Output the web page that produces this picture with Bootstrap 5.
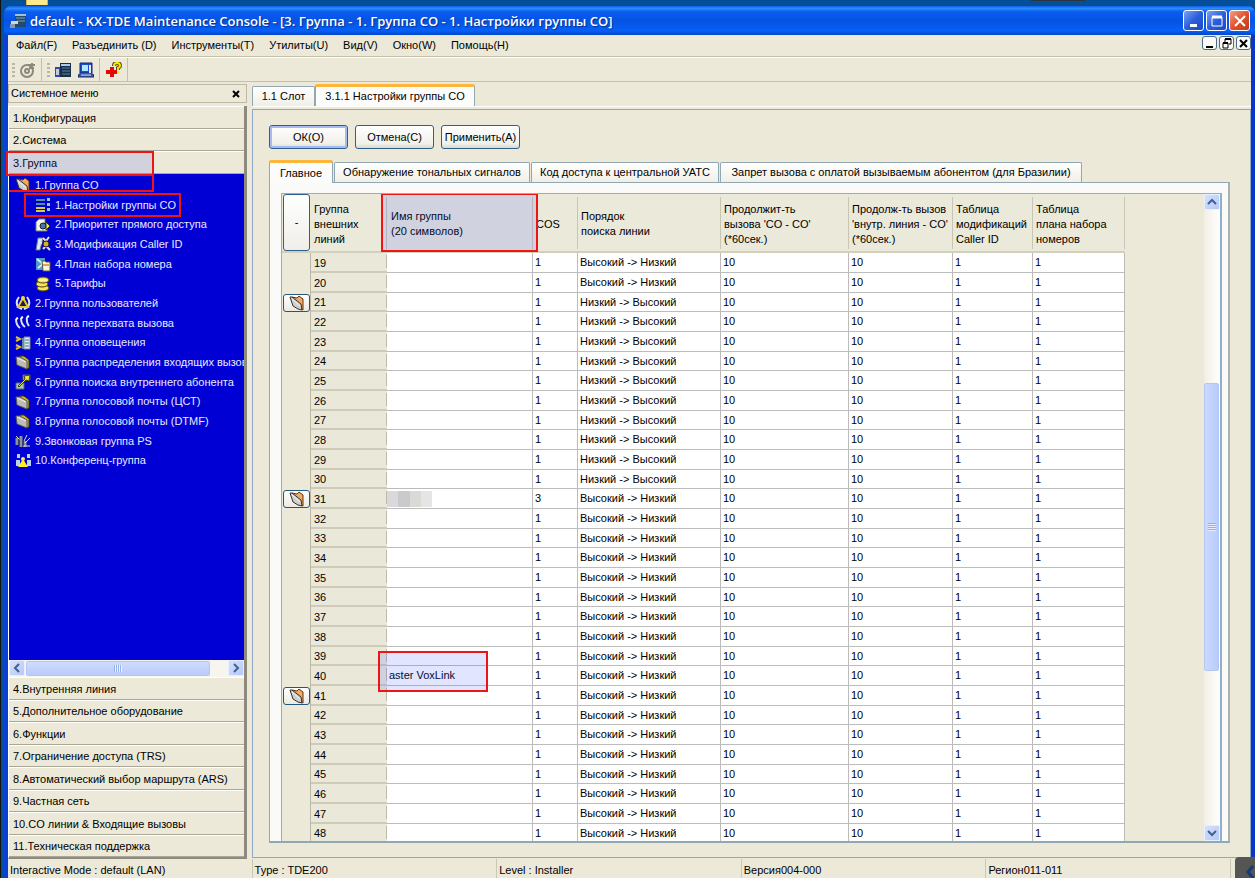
<!DOCTYPE html>
<html lang="ru">
<head>
<meta charset="utf-8">
<meta name="viewport" content="width=device-width, initial-scale=1">
<title>KX-TDE Maintenance Console</title>
<link href="https://cdn.jsdelivr.net/npm/bootstrap@5.3.0/dist/css/bootstrap.min.css" rel="stylesheet">
<style>
:root{--face:#ece9d8;--line:#c4c0ae;--steel:#91a7b4}
body{font:11px/15px "Liberation Sans",Arial,sans-serif;color:#000;background:#054e98;height:100vh;overflow:hidden}
button,input{font:inherit;color:inherit}
.desk{height:6px;flex:none;padding-left:25px;padding-right:170px}
.desk-folder{width:22px;height:5px;background:#ffe98a;border:solid #d9b64a;border-width:0 1px}
.desk-bar{width:54px;height:1px;background:#2a3340}
.win{margin-left:3px;border:solid #0a3fd8;border-width:0 4px;border-right-color:#0a35c8;background:var(--face);border-top-left-radius:7px;border-top-right-radius:7px;min-height:0}
.left-edge{border-left:1px solid #111}
.titlebar{height:29px;flex:none;margin:0 -4px;padding:0 5px 0 6px;border-radius:7px 7px 0 0;background:linear-gradient(#0a5fe6,#2b8cff 8%,#0a5cf0 20%,#0553e2 50%,#0560f8 85%,#0346c8)}
.titlebar h1{font:600 13px/20px "Open Sans","Noto Sans",sans-serif;color:#fff;text-shadow:1px 1px 1px #0a2f90}
.caps{gap:2px}
.cap{width:21px;height:21px;padding:0;border:1px solid #fff;border-radius:3px;background:linear-gradient(135deg,#7ba2f5,#2c5fdd 50%,#1c49c4)}
.cap-x{background:linear-gradient(135deg,#f0a088,#e0522e 50%,#c23a18)}
.cap svg,.mini svg{display:block;margin:auto}
.menubar{height:22px;flex:none;border-bottom:1px solid var(--line);padding:0 0 0 8px}
.menubar nav{gap:15px}
.menubar a{color:#000;text-decoration:none}
.mini{width:15px;height:14px;padding:0;border:1px solid #4a6d92;border-radius:3px;background:#fafaf6}
.toolbar{height:25px;flex:none;border-top:1px solid #fff;border-bottom:1px solid var(--line);padding-left:4px;gap:5px}
.grip{width:3px;height:14px;background:repeating-linear-gradient(#bbb7a4 0 2px,transparent 2px 4px)}
.tool{width:16px;height:16px;padding:0;border:0;background:none}
.tool+.tool{margin-left:2px}
.tool svg{display:block}
.vsep{width:1px;height:23px;background:var(--line)}
.vsep+.tool{margin-left:1px}
.side{width:239px;flex:none;margin-top:2px}
.side-head{height:19px;border:1px solid #bdb9a6;padding:0 5px 0 2px}
.side-head button{border:0;background:none;padding:0 1px}
.side-body{margin-top:3px;border:solid #8e8b7e;border-width:0 3px 2px 0;border-left:1px solid #fff;min-height:0}
.acc button{display:block;width:100%;height:23px;border:0;border-top:1px solid #fff;border-bottom:1px solid #aca899;background:var(--face);text-align:left;padding:0 4px;line-height:20px;flex:none;white-space:nowrap}
.acc button:nth-child(2n){height:22px}
.tree{background:#0000d4;min-height:0;overflow:hidden;padding-top:1px}
.tree a{display:flex;align-items:center;gap:4px;height:20px;padding-left:6px;color:#e8eaff;text-decoration:none;white-space:nowrap}
.tree a:nth-of-type(3n){height:19px}
.tree a.sub{padding-left:26px}
.tree svg{flex:none}
.hbar{height:17px;flex:none;background:#f6f5ee}
.sb{width:16px;height:16px;padding:0;flex:none;border:1px solid #e8efff;border-radius:2px;background:linear-gradient(135deg,#d5e0fd,#b5c8f8)}
.sb svg{display:block;margin:auto}
.thumb-h{height:15px;width:184px;margin:1px;border:1px solid #e8efff;outline:1px solid #b6c6ee;outline-offset:-1px;border-radius:2px;background:linear-gradient(#d0dcff,#b9cbfb)}
.main{min-width:0;margin-left:5px;margin-top:2px}
.tabs-a{height:23px;border-bottom:1px solid #fff;flex:none}
.tab-a,.tab-b{border:1px solid var(--steel);border-bottom:0;border-radius:2px 2px 0 0;background:linear-gradient(#fff,#f0efe6);padding:0;text-align:center;white-space:nowrap}
.tab-a{height:20px;width:63px}
.tab-a.on,.tab-b.on{background:#fcfcfa;border-top:3px solid #fdb53a}
.tab-a.on{height:22px;width:160px;line-height:15px}
.panel{margin:2px 0 1px;border:1px solid #8fa9c4;padding:15px 20px 14px 16px;min-height:0}
.dlg-row{gap:7px}
.dlg{width:79px;height:24px;padding:0;border:1px solid #2f5f8f;border-radius:3px;background:linear-gradient(#fff,#f1f0ea 80%,#dcd8cc);white-space:nowrap}
.dlg.ok{box-shadow:inset 0 0 0 2px #a4bdf0}
.tabs-b{margin-top:11px;gap:1px}
.tab-b{height:20px}
.tab-b.on{height:23px;margin-bottom:-1px;line-height:15px;position:relative;z-index:1}
.page{border:1px solid var(--steel);border-right:2px solid #a9b0b0;border-bottom-width:2px;background:#fafaf8;padding:10px 6px 0 11px;min-height:0}
.gridbox{border:solid #8fb0cc;border-width:1px 2px 0 1px;min-height:0;overflow:hidden;background:var(--face)}
.gridscroll{min-width:0;overflow:hidden}
.lines{table-layout:fixed;width:843px;border-collapse:separate;border-spacing:0;white-space:nowrap}
.lines th{height:59px;font-weight:400;padding:3px 0 0 3px;vertical-align:middle;border-bottom:2px solid #d3cfbd;background:linear-gradient(#c9c5b4,#c9c5b4) right 3px/1px 52px no-repeat #ebe9da}
.lines th.name-col{padding-left:4px}
.lines th.corner{padding:0 1px;background:var(--face)}
.corner button{width:27px;height:57px;display:block;border:1px solid #2f5f8f;border-radius:3px;background:linear-gradient(#fff,#efeee8)}
.lines td{height:20px;padding:0 0 0 2px;line-height:15px;background:#fff;border-right:1px solid #bcbcbc;border-bottom:1px solid #bcbcbc;vertical-align:middle}
.lines tbody tr:nth-child(3n) td{height:19px}
.lines td.exp{padding:0 0 0 1px;background:var(--face);border-right-color:#bcb8a8;border-bottom:0}
.lines td.num{background:linear-gradient(#bcbaa8,#bcbaa8) right 2px/1px 13px no-repeat #e9e8d9;border-right:0;border-bottom:2px solid #d0cab8;padding:2px 0 0 3px}
.exp button{width:27px;height:18px;padding:0;border:1px solid #24567f;border-radius:3px;background:linear-gradient(#fff,#eceae2);display:block}
.exp button svg{display:block;margin:auto}
.blurred{width:45px;height:16px;margin-left:-2px;background:linear-gradient(90deg,#d9d9dc 0 11px,#cacace 11px 23px,#d9d9d6 23px 34px,#e4e6e6 34px)}
.mark-box{position:absolute;border:2px solid #f01414;pointer-events:none;z-index:3}
.tint{background:rgba(60,80,255,.15)}
.m-group{left:-3px;right:90px;top:-1px;height:25px}
.m-co{left:-3px;right:90px;top:-1px;height:18px}
.m-set{left:15px;width:157px;top:-2px;height:24px}
.m-name{left:-6px;right:-5px;top:-1px;bottom:-1px}
.m-row{left:-9px;width:110px;top:-15px;height:41px}
.vbar{width:16px;flex:none;background:linear-gradient(90deg,#f1efe4,#fff)}
.before{flex:174 1 0}
.after{flex:155 1 0}
.thumb-v{flex:286 1 0;width:15px;border:1px solid #eaf0ff;outline:1px solid #b6c6ee;outline-offset:-1px;border-radius:2px;background:linear-gradient(90deg,#cbd9ff,#b7cbfd)}
.ticks-v{width:8px;height:8px;background:repeating-linear-gradient(#8fb0ee 0 1px,#e6eeff 1px 2px)}
.ticks-h{width:8px;height:7px;background:repeating-linear-gradient(90deg,#98b0e8 0 1px,#eef3ff 1px 2px)}
.status{height:19px;flex:none;padding-right:20px}
.status div{flex:1 1 0;border-right:1px solid #cbc7b6;padding:4px 0 0 2px;height:19px;line-height:15px;white-space:nowrap;overflow:hidden}
.dock{position:fixed;right:0;bottom:0;width:20px;height:21px;border:0;padding:0;background:#555553;border-radius:4px 0 0 0}
</style>
<script src="https://cdn.jsdelivr.net/npm/bootstrap@5.3.0/dist/js/bootstrap.bundle.min.js"></script>
</head>
<body class="d-flex flex-column left-edge">
<svg width="0" height="0" class="position-absolute" aria-hidden="true">
 <symbol id="open" viewBox="0 0 16 16"><path d="M3 2 8 3 10 1 14 4V15L12 14Z" fill="#f6a860" stroke="#5a3818"/><path d="M1 2 3 2 12 9 13 15 9 14 4 11Z" fill="#cfcfcb" stroke="#333"/><path d="M3 4 11 11" stroke="#f4f4f0"/></symbol>
 <symbol id="closed" viewBox="0 0 16 16"><path d="M5 2 9 2 14 6V14L11 15Z" fill="#d0b828" stroke="#3c320a"/><path d="M1 3 5 3 12 7V15L2 11Z" fill="#bdbdb6" stroke="#555"/><path d="M2 4 11 8" stroke="#eee"/></symbol>
 <symbol id="set" viewBox="0 0 16 16"><path d="M1 3h9M1 7h9" stroke="#4c95a0" stroke-width="2"/><path d="M1 11h9M1 14h9" stroke="#d8c94e" stroke-width="2"/><path d="M12 1h3v3h-3zM12 6h3v3h-3zM12 11h3v3h-3z" fill="#9fc6ea"/></symbol>
 <symbol id="prio" viewBox="0 0 16 16"><path d="M1 14V5L4 2h6v5l2 3v4Z" fill="#f4f4ec" stroke="#777"/><circle cx="8" cy="9" r="3" fill="#47a" stroke="#123"/><path d="M11 5 15 9l-4 4Z" fill="#f8e43a" stroke="#333"/></symbol>
 <symbol id="caller" viewBox="0 0 16 16"><path d="M3 2h5L5 14H1Z" fill="#dfe8f4" stroke="#678"/><path d="M4 7h3M8 2l3 3 3-4M8 13l3-3 4 4" stroke="#e5e5d8" stroke-width="2" fill="none"/><circle cx="11" cy="8" r="3" fill="#d5ae2a" stroke="#222"/></symbol>
 <symbol id="plan" viewBox="0 0 16 16"><path d="M1 2h9v12H1Z" fill="#4f9bc4"/><path d="M2 3 8 8 3 12" stroke="#d2edf8" stroke-width="2" fill="none"/><path d="M7 5h3l1 1h4v9H8Z" fill="#f7f4df" stroke="#555"/><path d="M8 9h7" stroke="#e3a83a" stroke-width="2"/></symbol>
 <symbol id="coins" viewBox="0 0 16 16"><g fill="#f4e45a" stroke="#50420a"><ellipse cx="8" cy="12" rx="6" ry="3"/><ellipse cx="7" cy="8" rx="6" ry="3"/><ellipse cx="8" cy="4" rx="6" ry="3"/></g><path d="M4 4h8" stroke="#fff"/></symbol>
 <symbol id="users" viewBox="0 0 16 16"><path d="M4 2Q0 7 3 12l4 2M12 2q4 5 1 10l-4 2" stroke="#dfe9ef" stroke-width="2" fill="none"/><path d="M8 3 13 12H3Z" fill="#1c1c50" stroke="#e3c72c" stroke-width="2"/><circle cx="8" cy="3" r="2" fill="#f4d838"/></symbol>
 <symbol id="pick" viewBox="0 0 16 16"><g fill="none" stroke="#d8e4dc" stroke-width="2"><path d="M1 4q0 6 4 9M6 3q0 6 4 9M12 2q-1 5 2 9"/></g><path d="M1 4l2-1M6 3l2-1M12 2l2-1" stroke="#fff" stroke-width="2"/></symbol>
 <symbol id="page" viewBox="0 0 16 16"><path d="M1 2l4 2-4 2M1 10l4 2-4 2" fill="none" stroke="#dcc12e" stroke-width="2"/><path d="M7 3h3v11H7z" fill="#5f8fa8"/><path d="M9 2h6v12H9z" fill="#dbe7f4" stroke="#789"/><path d="M10 5h4M10 8h4M10 11h4" stroke="#577"/></symbol>
 <symbol id="hunt" viewBox="0 0 16 16"><path d="M8 1h7v5H8zM1 9h8v6H1z" fill="#a8c3c6" stroke="#567"/><path d="M3 12 10 5 9 2l6-1-1 6-3-1-7 7Z" fill="#f1e22e" stroke="#443c08"/></symbol>
 <symbol id="ring" viewBox="0 0 16 16"><path d="M2 5v7M6 3v11M10 8v6" stroke="#8b9496" stroke-width="3"/><path d="M1 3 5 7M12 2 9 8M15 5l-5 5M8 13h7" stroke="#dcdccc" stroke-width="1"/><path d="M4 6v7M8 7v6" stroke="#333"/></symbol>
 <symbol id="conf" viewBox="0 0 16 16"><path d="M2 1h3v4H2zM12 1h3v4h-3zM1 7h4v6H1zM12 7h4v6h-4z" fill="#b9d6e6"/><circle cx="8" cy="6" r="2" fill="#ffe95a"/><path d="M8 6 13 14H3Z" fill="#ffee20"/></symbol>
 <symbol id="up" viewBox="0 0 10 10"><path d="M1 7 5 3l4 4" fill="none" stroke="#41608f" stroke-width="2"/></symbol>
 <symbol id="down" viewBox="0 0 10 10"><path d="M1 3 5 7l4-4" fill="none" stroke="#41608f" stroke-width="2"/></symbol>
 <symbol id="lt" viewBox="0 0 10 10"><path d="M7 1 3 5l4 4" fill="none" stroke="#41608f" stroke-width="2"/></symbol>
 <symbol id="rt" viewBox="0 0 10 10"><path d="M3 1 7 5l-4 4" fill="none" stroke="#41608f" stroke-width="2"/></symbol>
</svg>

<div class="desk d-flex justify-content-between"><div class="desk-folder"></div><div class="desk-bar"></div></div>

<div class="win d-flex flex-column flex-grow-1">
 <header class="titlebar d-flex align-items-center">
  <svg width="16" height="16" viewBox="0 0 16 16"><path d="M5 1h11v13H5z" fill="#234a68"/><path d="M5 1h11v2H5z" fill="#9bc4dc"/><path d="M6 5h9M7 8h8" stroke="#7ba5ba"/><path d="M1 8h7v3H1z" fill="#cdd6da"/><path d="M0 11h5v4H0z" fill="#8b9aa2"/></svg>
  <h1 class="m-0 ps-1 flex-grow-1 text-nowrap">default - KX-TDE Maintenance Console - [3. Группа - 1. Группа CO - 1. Настройки группы CO]</h1>
  <div class="caps d-flex">
   <button class="cap" aria-label="Свернуть"><svg width="14" height="14"><path d="M3 10h7v3H3z" fill="#fff"/></svg></button>
   <button class="cap" aria-label="Развернуть"><svg width="14" height="14"><path d="M2 3h10v9H2z" fill="none" stroke="#fff"/><path d="M2 3h10" stroke="#fff" stroke-width="3"/></svg></button>
   <button class="cap cap-x" aria-label="Закрыть"><svg width="14" height="14"><path d="M2 2l10 10M12 2l-10 10" stroke="#fff" stroke-width="2"/></svg></button>
  </div>
 </header>

 <div class="menubar d-flex justify-content-between">
  <nav class="d-flex align-items-center">
   <a href="#">Файл(F)</a><a href="#">Разъединить (D)</a><a href="#">Инструменты(T)</a><a href="#">Утилиты(U)</a><a href="#">Вид(V)</a><a href="#">Окно(W)</a><a href="#">Помощь(H)</a>
  </nav>
  <div class="caps d-flex pt-1" style="margin-top:-3px">
   <button class="mini" aria-label="Свернуть окно"><svg width="11" height="11"><path d="M2 8h7v2H2z"/></svg></button>
   <button class="mini" aria-label="Восстановить окно"><svg width="11" height="11"><path d="M4 4V1h6v5H8M2 5h5v5H2z" fill="none" stroke="#000"/><path d="M4 1h6M2 5h5" stroke="#000" stroke-width="2"/></svg></button>
   <button class="mini" aria-label="Закрыть окно"><svg width="11" height="11"><path d="M2 2l7 7M9 2L2 9" stroke="#000" stroke-width="2"/></svg></button>
  </div>
 </div>

 <div class="toolbar d-flex align-items-center">
  <span class="grip"></span>
  <button class="tool" aria-label="Подключить"><svg width="16" height="16" viewBox="0 0 16 16" fill="none" stroke="#8b887c" stroke-width="2"><circle cx="7" cy="9" r="6"/><circle cx="7" cy="9" r="2"/><path d="M8 3h7M9 6h5M12 1v6"/></svg></button>
  <span class="vsep"></span>
  <span class="grip"></span>
  <button class="tool" aria-label="Станция"><svg width="16" height="16" viewBox="0 0 16 16"><path d="M5 1h11v14H5z" fill="#18304c"/><path d="M6 2h9v2H6z" fill="#a9cdf0"/><path d="M7 6h8M7 9h8M7 12h8" stroke="#5c8098"/><path d="M0 5h5v10H0z" fill="#3347b4"/><path d="M1 7h3v6H1z" fill="#c4cce0"/></svg></button>
  <button class="tool" aria-label="Компьютер"><svg width="16" height="16" viewBox="0 0 16 16"><path d="M2 1h12v10H2z" fill="#244ad0" stroke="#14246c"/><path d="M4 3h6v6H4z" fill="#a8ecff"/><path d="M11 3h2v8h-2z" fill="#e3e8f2"/><path d="M1 12h14l1 3H0z" fill="#3c63b6" stroke="#14246c"/><path d="M3 13h10" stroke="#d3def4"/></svg></button>
  <span class="vsep"></span>
  <button class="tool" aria-label="Справка"><svg width="16" height="16" viewBox="0 0 16 16"><path d="M0 8h4V5h4v3h3v4H8v3H4v-3H0z" fill="#e60808"/><path d="M8 4q0-3 3-3t3 3q0 1-2 2v2" fill="none" stroke="#554a00" stroke-width="4"/><path d="M8 4q0-3 3-3t3 3q0 1-2 2v2M12 9v2" fill="none" stroke="#ffe600" stroke-width="2"/></svg></button>
  <span class="vsep"></span>
 </div>

 <div class="d-flex flex-grow-1" style="min-height:0">
  <aside class="side d-flex flex-column">
   <div class="side-head d-flex justify-content-between align-items-center"><span>Системное меню</span><button aria-label="Закрыть меню"><svg width="8" height="8"><path d="M1 1l6 6M7 1L1 7" stroke="#000" stroke-width="2"/></svg></button></div>
   <div class="side-body d-flex flex-column flex-grow-1">
    <div class="acc d-flex flex-column">
     <button>1.Конфигурация</button><button>2.Система</button>
     <button class="position-relative">3.Группа<span class="mark-box tint m-group"></span></button>
    </div>
    <nav class="tree flex-grow-1">
     <a href="#" class="position-relative"><svg width="16" height="16"><use href="#open"/></svg>1.Группа CO<span class="mark-box m-co"></span></a>
     <a href="#" class="sub position-relative"><svg width="16" height="16"><use href="#set"/></svg>1.Настройки группы CO<span class="mark-box m-set"></span></a>
     <a href="#" class="sub"><svg width="16" height="16"><use href="#prio"/></svg>2.Приоритет прямого доступа</a>
     <a href="#" class="sub"><svg width="16" height="16"><use href="#caller"/></svg>3.Модификация Caller ID</a>
     <a href="#" class="sub"><svg width="16" height="16"><use href="#plan"/></svg>4.План набора номера</a>
     <a href="#" class="sub"><svg width="16" height="16"><use href="#coins"/></svg>5.Тарифы</a>
     <a href="#"><svg width="16" height="16"><use href="#users"/></svg>2.Группа пользователей</a>
     <a href="#"><svg width="16" height="16"><use href="#pick"/></svg>3.Группа перехвата вызова</a>
     <a href="#"><svg width="16" height="16"><use href="#page"/></svg>4.Группа оповещения</a>
     <a href="#"><svg width="16" height="16"><use href="#closed"/></svg>5.Группа распределения входящих вызов</a>
     <a href="#"><svg width="16" height="16"><use href="#hunt"/></svg>6.Группа поиска внутреннего абонента</a>
     <a href="#"><svg width="16" height="16"><use href="#closed"/></svg>7.Группа голосовой почты (ЦСТ)</a>
     <a href="#"><svg width="16" height="16"><use href="#closed"/></svg>8.Группа голосовой почты (DTMF)</a>
     <a href="#"><svg width="16" height="16"><use href="#ring"/></svg>9.Звонковая группа PS</a>
     <a href="#"><svg width="16" height="16"><use href="#conf"/></svg>10.Конференц-группа</a>
    </nav>
    <div class="hbar d-flex justify-content-between">
     <div class="d-flex"><button class="sb" aria-label="Влево"><svg width="10" height="10"><use href="#lt"/></svg></button>
     <div class="thumb-h d-flex align-items-center justify-content-center"><span class="ticks-h"></span></div></div>
     <button class="sb" aria-label="Вправо"><svg width="10" height="10"><use href="#rt"/></svg></button>
    </div>
    <div class="acc d-flex flex-column">
     <button>4.Внутренняя линия</button><button>5.Дополнительное оборудование</button><button>6.Функции</button><button>7.Ограничение доступа (TRS)</button><button>8.Автоматический выбор маршрута (ARS)</button><button>9.Частная сеть</button><button>10.CO линии &amp; Входящие вызовы</button><button>11.Техническая поддержка</button>
    </div>
   </div>
  </aside>

  <main class="main d-flex flex-column flex-grow-1">
   <div class="tabs-a d-flex align-items-end"><button class="tab-a">1.1 Слот</button><button class="tab-a on">3.1.1 Настройки группы CO</button></div>
   <section class="panel d-flex flex-column flex-grow-1">
    <div class="dlg-row d-flex flex-shrink-0">
     <button class="dlg ok">ОК(O)</button><button class="dlg">Отмена(C)</button><button class="dlg">Применить(A)</button>
    </div>
    <div class="tabs-b d-flex align-items-end flex-shrink-0">
     <button class="tab-b on" style="width:64px">Главное</button>
     <button class="tab-b" style="width:196px">Обнаружение тональных сигналов</button>
     <button class="tab-b" style="width:188px">Код доступа к центральной УАТС</button>
     <button class="tab-b" style="width:362px">Запрет вызова с оплатой вызываемым абонентом (для Бразилии)</button>
    </div>
    <div class="page d-flex flex-column flex-grow-1">
     <div class="gridbox d-flex flex-grow-1">
      <div class="gridscroll flex-grow-1">
       <table class="lines">
        <colgroup><col style="width:29px"><col style="width:76px"><col style="width:146px"><col style="width:45px"><col style="width:143px"><col style="width:128px"><col style="width:104px"><col style="width:80px"><col style="width:92px"></colgroup>
        <thead><tr>
         <th class="corner"><button aria-label="Свернуть все">-</button></th>
         <th>Группа<br>внешних<br>линий</th>
         <th class="name-col position-relative">Имя группы<br>(20 символов)<span class="mark-box tint m-name"></span></th>
         <th>COS</th><th>Порядок<br>поиска линии</th>
         <th>Продолжит-ть<br>вызова 'CO - CO'<br>(*60сек.)</th>
         <th>Продолж-ть вызов<br>'внутр. линия - CO'<br>(*60сек.)</th>
         <th>Таблица<br>модификаций<br>Caller ID</th>
         <th>Таблица<br>плана набора<br>номеров</th>
        </tr></thead>
        <tbody id="rows"></tbody>
       </table>
      </div>
      <div class="vbar d-flex flex-column">
       <button class="sb" aria-label="Вверх"><svg width="10" height="10"><use href="#up"/></svg></button>
       <div class="before"></div>
       <div class="thumb-v d-flex align-items-center justify-content-center"><span class="ticks-v"></span></div>
       <div class="after"></div>
       <button class="sb" aria-label="Вниз"><svg width="10" height="10"><use href="#down"/></svg></button>
      </div>
     </div>
    </div>
   </section>
  </main>
 </div>

 <footer class="status d-flex">
  <div>Interactive Mode : default (LAN)</div><div>Type : TDE200</div><div>Level : Installer</div><div>Версия004-000</div><div>Регион011-011</div>
 </footer>
</div>
<button class="dock" aria-label="Показать панель"><svg width="20" height="21"><path d="M18 9l-5 6 5 6" fill="none" stroke="#123a7c" stroke-width="3"/></svg></button>

<script>
const body = document.getElementById('rows');
let html = '';
for (let n = 19; n <= 48; n++) {
  const folder = n % 10 === 1 ? '<button aria-label="Развернуть"><svg width="18" height="16"><use href="#open"/></svg></button>' : '';
  const order = n >= 21 && n <= 30 ? 'Низкий -&gt; Высокий' : 'Высокий -&gt; Низкий';
  let name = '';
  if (n === 31) name = '<div class="blurred"></div>';
  if (n === 40) name = 'aster VoxLink<span class="mark-box tint m-row"></span>';
  html += `<tr><td class="exp">${folder}</td><td class="num">${n}</td><td class="${n === 40 ? 'position-relative' : ''}">${name}</td>` +
    `<td>${n === 31 ? 3 : 1}</td><td>${order}</td><td>10</td><td>10</td><td>1</td><td>1</td></tr>`;
}
body.innerHTML = html;
</script>
</body>
</html>
